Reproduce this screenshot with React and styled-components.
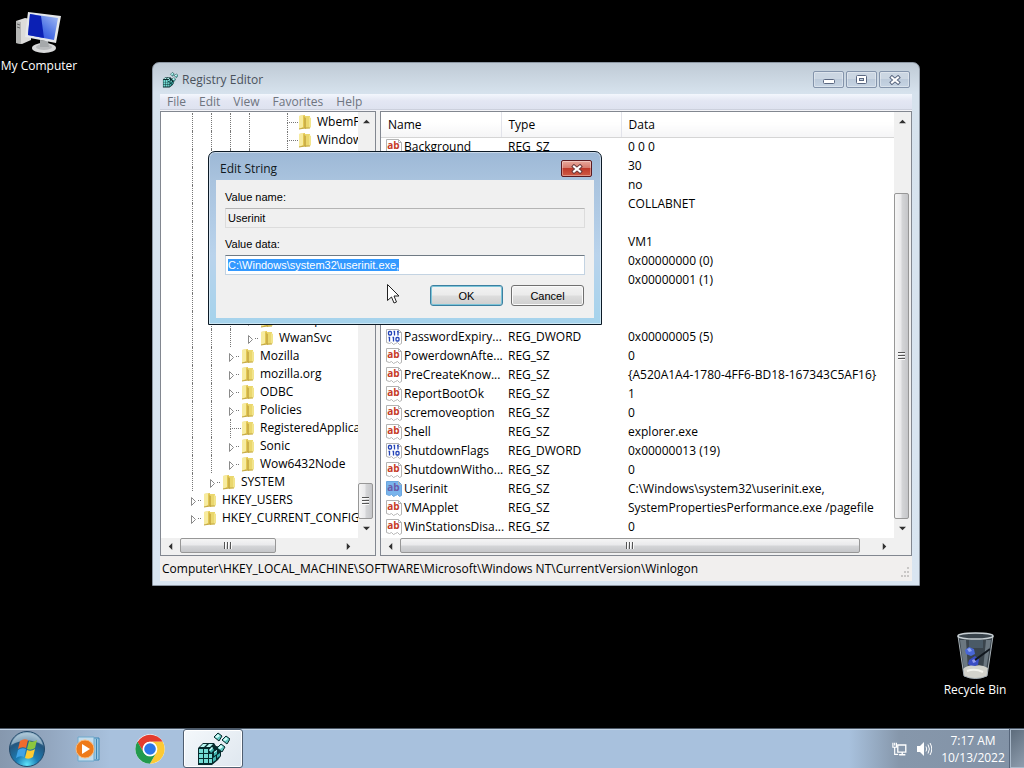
import { useEffect, useRef } from "react";
import styled, { createGlobalStyle, css } from "styled-components";

const fonts = {
  ui: `"Open Sans", "Noto Sans", sans-serif`,
  dialog: `"Liberation Sans", Arial, sans-serif`,
};

const colors = {
  text: "#000",
  muted: "#6f7580",
  border: "#828790",
  dots: "#777",
  select: "#3399ff",
};

const GlobalStyle = createGlobalStyle`
  * {
    box-sizing: border-box;
  }
  body {
    margin: 0;
    background: #000;
    font-family: ${fonts.ui};
    font-size: 12px;
    line-height: 16px;
    color: ${colors.text};
  }
  button, input {
    font: inherit;
    color: inherit;
    padding: 0;
    margin: 0;
  }
  svg {
    flex: none;
  }
`;

const Desktop = styled.div`
  position: relative;
  display: flex;
  flex-direction: column;
  min-height: 100vh;
  overflow: hidden;
  background: #000;
`;

const Workspace = styled.main`
  flex: 1;
`;

/* desktop shortcuts */

const Shortcut = styled.a`
  position: absolute;
  left: ${(p) => p.$x};
  top: ${(p) => p.$y}px;
  display: flex;
  flex-direction: column;
  align-items: center;
  justify-content: space-between;
  width: 80px;
  height: 66px;
  color: #fff;
  text-decoration: none;
  white-space: nowrap;
`;

/* windows */

const Window = styled.section`
  position: absolute;
  left: 152px;
  top: 62px;
  width: 768px;
  display: flex;
  flex-direction: column;
  padding: 0 7px 4px;
  border: 1px solid #8c96a2;
  border-radius: 7px 7px 0 0;
  background: linear-gradient(#bfcad5, #d6e2ed 30px, #d9e5f1);
`;

const TitleBar = styled.header`
  display: flex;
  align-items: flex-start;
  justify-content: space-between;
  height: 31px;
  padding: 8px 2px 0;
`;

const Title = styled.h1`
  display: flex;
  align-items: center;
  gap: 4px;
  margin: 0;
  font-size: 12px;
  line-height: 18px;
  font-weight: 400;
  color: #4a525c;
`;

const Controls = styled.div`
  display: flex;
  gap: 2px;
`;

const ControlButton = styled.button`
  display: flex;
  align-items: center;
  justify-content: center;
  width: 31px;
  height: 17px;
  border: 1px solid #8494ab;
  border-radius: 2px;
  background: linear-gradient(#cbd6e2 50%, #bccada 50%, #c6d4e3);
  box-shadow: inset 0 0 0 1px rgba(255, 255, 255, 0.35);
  ${(p) =>
    p.$danger &&
    css`
      border-color: #5b1a20;
      background: linear-gradient(#e9a89c, #d67b6d 46%, #bf3a2a 50%, #cf5a45);
    `}
`;

const MenuBar = styled.nav`
  display: flex;
  gap: 1px;
  height: 17px;
  padding: 0 1px;
  background: linear-gradient(#f3f7fd, #e3e6f3 7px, #dee2ef 15px, #b9bdc9 16px, #f4f4f8 16px);
`;

const MenuItem = styled.button`
  height: 15px;
  padding: 0 6px;
  border: 0;
  background: none;
  color: ${colors.muted};
  line-height: 14px;
`;

const Panes = styled.div`
  display: grid;
  grid-template-columns: 216px 1fr;
  gap: 4px;
  height: 445px;
  background: #f0f0f0;
`;

const Pane = styled.div`
  display: grid;
  grid-template-columns: 1fr 17px;
  grid-template-rows: 1fr 17px;
  min-width: 0;
  border: 1px solid ${colors.border};
  background: #f0f0f0;
`;

const PaneContent = styled.div`
  min-width: 0;
  overflow: hidden;
  background: #fff;
`;

const StatusBar = styled.footer`
  display: flex;
  align-items: flex-end;
  justify-content: space-between;
  height: 25px;
  padding: 0 2px 4px;
  background: #f1efee;
`;

/* registry tree */

const Tree = styled.ul`
  margin: 0;
  padding: 1px 0 0 22px;
  list-style: none;
`;

const TreeRow = styled.li`
  display: flex;
  align-items: center;
  height: 18px;
  white-space: nowrap;
`;

const Guide = styled.span`
  flex: none;
  width: 19px;
  height: 18px;
  padding-left: 9px;
  &::before {
    content: "";
    display: block;
    width: ${(p) => (p.$tee ? 10 : 1)}px;
    height: ${(p) => (p.$tee ? 9 : 18)}px;
    border-left: ${(p) => (p.$last ? 0 : 1)}px dotted ${colors.dots};
    border-bottom: ${(p) => (p.$tee ? 1 : 0)}px dotted ${colors.dots};
  }
  &::after {
    content: "";
    display: ${(p) => (p.$tee ? "block" : "none")};
    height: 9px;
    border-left: 1px dotted ${colors.dots};
  }
`;

const Expander = styled.button`
  display: flex;
  flex: none;
  align-items: center;
  width: 19px;
  height: 18px;
  padding: 2px 0 0 8px;
  border: 0;
  background: none;
`;

const TreeLabel = styled.span`
  margin-left: 4px;
`;

/* value list */

const ValueTable = styled.table`
  width: 100%;
  table-layout: fixed;
  border-collapse: collapse;
  th, td {
    padding: 0 0 0 7px;
    text-align: left;
    font-weight: 400;
    white-space: nowrap;
  }
  th {
    height: 25px;
    padding-top: 2px;
    border-bottom: 1px solid #d5d5d5;
    border-right: 1px solid #e2e3ea;
    background: linear-gradient(#fff 40%, #f5f5f6);
  }
  th:last-child {
    border-right: 0;
  }
  td {
    height: 19px;
  }
`;

const NameCell = styled.div`
  display: flex;
  align-items: center;
  gap: 2px;
  margin-left: -2px;
`;

/* scrollbars */

const Bar = styled.div`
  display: flex;
  flex-direction: ${(p) => (p.$vertical ? "column" : "row")};
  background: #f0f0f0;
`;

const ArrowButton = styled.button`
  display: flex;
  flex: none;
  align-items: center;
  justify-content: center;
  width: 19px;
  height: 17px;
  border: 0;
  background: none;
  ${(p) =>
    p.$vertical &&
    css`
      width: 17px;
      height: 19px;
    `}
`;

const Track = styled.div`
  display: flex;
  flex: 1;
  flex-direction: inherit;
  min-width: 0;
  min-height: 0;
`;

const Space = styled.div`
  flex: ${(p) => p.$grow} 0 0;
`;

const Thumb = styled.div`
  display: flex;
  flex: ${(p) => p.$grow} 0 0;
  align-items: center;
  justify-content: center;
  border: 1px solid #979797;
  border-radius: 2px;
  margin: ${(p) => (p.$vertical ? "0 2px 0 0" : "0 0 2px")};
  background: linear-gradient(
    ${(p) => (p.$vertical ? "to right" : "to bottom")},
    #f5f5f5,
    #e9e9eb 48%,
    #d5d6d8 52%,
    #c5c6c9
  );
`;

const Grip = styled.span`
  width: 8px;
  height: 7px;
  background: repeating-linear-gradient(
    ${(p) => (p.$vertical ? "to bottom" : "to right")},
    #555 0 1px,
    #fafafa 1px 2px,
    transparent 2px 3px
  );
  ${(p) =>
    p.$vertical &&
    css`
      width: 7px;
      height: 8px;
    `}
`;

/* edit dialog */

const Dialog = styled.section`
  position: absolute;
  left: 208px;
  top: 151px;
  width: 394px;
  padding: 0 7px 6px;
  border: 1px solid #0c1a26;
  border-radius: 7px 7px 0 0;
  background: linear-gradient(#9db8d6, #a9c3de 28px, #b9d3ec 60%, #a5d3ec);
  box-shadow: inset 0 0 0 1px rgba(255, 255, 255, 0.45);
`;

const DialogTitleBar = styled.header`
  display: flex;
  justify-content: space-between;
  height: 28px;
  padding: 8px 2px 0 4px;
`;

const DialogTitle = styled.h2`
  margin: 0;
  font-size: 12px;
  line-height: 18px;
  font-weight: 400;
  color: #101820;
`;

const Form = styled.form`
  display: flex;
  flex-direction: column;
  height: 138px;
  padding: 10px 9px 12px;
  background: #f0f0f0;
  font-family: ${fonts.dialog};
  font-size: 11px;
  line-height: 14px;
`;

const Label = styled.label`
  height: 18px;
`;

const TextBox = styled.input`
  width: 100%;
  height: 20px;
  margin-bottom: 9px;
  padding: 0 2px;
  border: 1px solid #c3d3e2;
  border-top-color: #6f7a84;
  background: #fff;
  outline: none;
  &[readonly] {
    border-color: #dcdcdc;
    border-top-color: #b4b4b4;
    background: #f0f0f0;
  }
  &::selection {
    background: ${colors.select};
    color: #fff;
  }
`;

const DialogButtons = styled.div`
  display: flex;
  justify-content: flex-end;
  gap: 8px;
  padding: 1px 1px 0 0;
`;

const DialogButton = styled.button`
  width: 73px;
  height: 21px;
  border: 1px solid #707070;
  border-radius: 3px;
  background: linear-gradient(#f2f2f2, #ebebeb 48%, #dddddd 52%, #cfcfcf);
  box-shadow: inset 0 0 0 1px #fafafa;
  ${(p) =>
    p.$primary &&
    css`
      border-color: #3c7fa0;
      box-shadow: inset 0 0 0 1px #7cc4d8;
    `}
`;

const Pointer = styled.svg`
  position: absolute;
  left: 386px;
  top: 283px;
`;

/* taskbar */

const Taskbar = styled.footer`
  display: flex;
  height: 40px;
  border-top: 1px solid #4c5866;
  background: linear-gradient(to right, #8698ae, #93a7c0 50px, #a8c1dd 110px, #a8c1dd calc(100% - 175px), #8697ab calc(100% - 125px), #8292a6);
  box-shadow: inset 0 1px 0 #c3d4e6;
`;

const TaskButton = styled.button`
  display: flex;
  align-items: center;
  justify-content: center;
  width: 62px;
  border: 0;
  background: none;
  ${(p) =>
    p.$start &&
    css`
      width: 54px;
      margin-right: 3px;
    `}
  ${(p) =>
    p.$active &&
    css`
      width: 60px;
      margin-left: 2px;
      border: 1px solid #4f5e70;
      border-radius: 3px;
      background: linear-gradient(135deg, #f4f8fb, #dfe7ef);
      box-shadow: inset 0 0 0 1px #fff;
    `}
`;

const Tray = styled.div`
  display: flex;
  align-items: center;
  gap: 4px;
  margin-left: auto;
  color: #fff;
`;

const TrayIcons = styled.div`
  display: flex;
  gap: 8px;
  margin-right: 4px;
`;

const Clock = styled.time`
  width: 66px;
  text-align: center;
  line-height: 17px;
`;

const ShowDesktop = styled.button`
  align-self: stretch;
  width: 14px;
  border: 1px solid #a9b9ca;
  border-right: 0;
  background: linear-gradient(135deg, #5d6c7c, #8e9dae);
  box-shadow: -1px 0 0 #56657a;
`;

/* guides: "|" line, "-" tee, ">" expander, " " gap */
const treeRows = [
  { guides: "|||| -", label: "WbemP" },
  { guides: "|||| -", label: "Window" },
  { guides: "||||" },
  { guides: "||||" },
  { guides: "||||" },
  { guides: "||||" },
  { guides: "||||" },
  { guides: "||||" },
  { guides: "||||" },
  { guides: "||||" },
  { guides: "||||" },
  { guides: "|||>", label: "Workspaces" },
  { guides: "|||>", label: "WwanSvc" },
  { guides: "||>", label: "Mozilla" },
  { guides: "||>", label: "mozilla.org" },
  { guides: "||>", label: "ODBC" },
  { guides: "||>", label: "Policies" },
  { guides: "||-", label: "RegisteredApplica" },
  { guides: "||>", label: "Sonic" },
  { guides: "||>", label: "Wow6432Node" },
  { guides: "|>", label: "SYSTEM" },
  { guides: ">", label: "HKEY_USERS" },
  { guides: ">", label: "HKEY_CURRENT_CONFIG" },
];

const values = [
  { name: "Background", type: "REG_SZ", data: "0 0 0" },
  { data: "30" },
  { data: "no" },
  { data: "COLLABNET" },
  {},
  { data: "VM1" },
  { data: "0x00000000 (0)" },
  { data: "0x00000001 (1)" },
  {},
  {},
  { name: "PasswordExpiry...", type: "REG_DWORD", data: "0x00000005 (5)" },
  { name: "PowerdownAfte...", type: "REG_SZ", data: "0" },
  { name: "PreCreateKnow...", type: "REG_SZ", data: "{A520A1A4-1780-4FF6-BD18-167343C5AF16}" },
  { name: "ReportBootOk", type: "REG_SZ", data: "1" },
  { name: "scremoveoption", type: "REG_SZ", data: "0" },
  { name: "Shell", type: "REG_SZ", data: "explorer.exe" },
  { name: "ShutdownFlags", type: "REG_DWORD", data: "0x00000013 (19)" },
  { name: "ShutdownWitho...", type: "REG_SZ", data: "0" },
  { name: "Userinit", type: "REG_SZ", data: "C:\\Windows\\system32\\userinit.exe,", selected: true },
  { name: "VMApplet", type: "REG_SZ", data: "SystemPropertiesPerformance.exe /pagefile" },
  { name: "WinStationsDisa...", type: "REG_SZ", data: "0" },
];

function RegeditIcon({ size }) {
  const cubes = [[18, 1], [26, 4], [21, 12]];
  return (
    <svg width={size} height={size} viewBox="0 0 34 34" aria-hidden="true">
      <path d="M2 16l5-5h11l2 3 5 1v9l-3 4-6 5H2z" fill="#062a2c" />
      <path d="M3 17h4v4H3zM8 17h4v4H8zM3 22h4v4H3zM8 22h4v4H8zM3 27h4v4H3zM8 27h4v4H8zM13 27h3v4h-3zM13 22h3v4h-3z" fill="#74dcd5" />
      <path d="M4 15l3-3h4l-3 3zM10 15l3-3h4l-3 3z" fill="#b6f6f0" />
      <path d="M13 18l3-3 2 3-3 3zM18 20l3-2v4l-3 2zM17 26l3-2v4l-3 2zM21 23l3-2v3l-3 2z" fill="#3fb5b0" />
      <path d="M13 18l3-3 1 1-3 3zM18 20l3-2v1l-3 2z" fill="#c9fffa" />
      {cubes.map(([x, y]) => (
        <g key={x} transform={`translate(${x} ${y})`}>
          <path d="M4 0l4 3-3 5-5-4z" fill="#5fc4be" stroke="#04282a" />
          <path d="M4 1l2 2-3 2-2-1z" fill="#d4fffb" />
        </g>
      ))}
    </svg>
  );
}

function FolderIcon() {
  return (
    <svg width="16" height="16" viewBox="0 0 16 16" aria-hidden="true">
      <path d="M2 2l6-1v13l-6 1z" fill="#e3c852" />
      <path d="M2 2l4-1v12l-4 2z" fill="#f7eb9f" />
      <path d="M8 2h5v12l-5 1z" fill="#ead76e" />
      <path d="M7 3l2 1v11l-2-1z" fill="#cdb048" />
      <path d="M12 3l2 1v9l-1 1h-1z" fill="#f2e48c" />
      <path d="M2 15l6-1 5 0" stroke="#c3a743" fill="none" />
    </svg>
  );
}

function ValueIcon({ binary, selected }) {
  const ink = selected ? "#6a5aa8" : "#c63a28";
  return (
    <svg width="16" height="16" viewBox="0 0 16 16" aria-hidden="true">
      <path
        d="M.5.5h12l3 3v11l-2 1-2-2-2 1-2 1-2-2-2 1-3-1z"
        fill={selected ? "#79b4ec" : "#fff"}
        stroke={selected ? "#6aa5de" : "#b4b4b4"}
      />
      <path d="M12.500.5v3h3" fill="none" stroke="#b4b4b4" />
      {binary ? (
        <g fill="none" stroke="#2444b8" strokeWidth="1.300">
          <rect x="2.500" y="2.500" width="3" height="3.500" rx="1" />
          <path d="M7.500 2.500h1v4M11 2.500h1v4M2.500 8.500h1v4M6.500 8.500h1v4" />
          <rect x="10" y="8.500" width="3" height="3.500" rx="1" />
        </g>
      ) : (
        <text x="7.500" y="10" textAnchor="middle" fontSize="10" fontWeight="700" fontFamily="Open Sans" fill={ink}>
          ab
        </text>
      )}
    </svg>
  );
}

function ComputerIcon() {
  return (
    <svg width="48" height="46" viewBox="0 0 48 46" aria-hidden="true">
      <defs>
        <linearGradient id="screen" x1="0" y1="1" x2="1" y2="0">
          <stop offset="0" stopColor="#1a35d8" />
          <stop offset=".5" stopColor="#4f74e6" />
          <stop offset="1" stopColor="#a9c0f4" />
        </linearGradient>
      </defs>
      <path d="M1 13l9-3 6 1v21l-9 4-6-1z" fill="#dcdcda" />
      <path d="M1 13l5 1v22l-5-1z" fill="#b5b6b5" />
      <path d="M2 16l3 1M2 19l3 1" stroke="#666" />
      <ellipse cx="29" cy="40" rx="12" ry="5" fill="#d9dadb" />
      <ellipse cx="29" cy="39" rx="8" ry="3" fill="#b9bbbd" />
      <path d="M25 32l8 1 1 6h-9z" fill="#a6a9ab" />
      <path d="M13 4l33 4-5 27-31-6z" fill="#e6e8ea" />
      <path d="M15 6l28 4-4 22-26-5z" fill="url(#screen)" />
      <path d="M15 6l11 2 3 22-16-3z" fill="#0b20b4" />
    </svg>
  );
}

function RecycleBinIcon() {
  return (
    <svg width="40" height="48" viewBox="0 0 40 48" aria-hidden="true">
      <path d="M3 4h35l-6 40q-11 5-23 0z" fill="#3a444c" />
      <path d="M5 8h6l2 30h-4zM31 8h5l-5 30h-3z" fill="#6b7780" />
      <path d="M14 8h14v8H14z" fill="#4a5a66" />
      <path d="M10 18l4-3 5 2 1 5-4 2-5-2z" fill="#4967d6" />
      <path d="M12 17l3-1 2 3-3 1z" fill="#8ea6f2" />
      <path d="M14 28l6-4 4 3-1 6-6 2-4-3z" fill="#3a4dc4" />
      <path d="M17 28l3-1 1 3-3 1z" fill="#8f98ee" />
      <path d="M20 28l15-11" stroke="#10161d" strokeWidth="2" />
      <path d="M8 37q5-5 12-3 6-2 13 2l-1 8q-11 5-23 0z" fill="#d3d3cc" />
      <path d="M12 39q8-3 16 1" fill="none" stroke="#f2f2ec" strokeWidth="2" />
      <path d="M3 4l6 40q11 5 23 0l6-40" fill="none" stroke="#a7b0b6" />
      <ellipse cx="20.500" cy="4" rx="17.500" ry="3" fill="#39434b" stroke="#c8d0d4" strokeWidth="1.500" />
    </svg>
  );
}

function StartIcon() {
  return (
    <svg width="38" height="38" viewBox="0 0 38 38" aria-hidden="true">
      <defs>
        <radialGradient id="orb" cx=".5" cy=".95" r=".9">
          <stop offset="0" stopColor="#5fe4fa" />
          <stop offset=".35" stopColor="#1b7db5" />
          <stop offset=".75" stopColor="#24577f" />
          <stop offset="1" stopColor="#8fb0c6" />
        </radialGradient>
      </defs>
      <circle cx="19" cy="19" r="17.500" fill="url(#orb)" stroke="#234a6b" />
      <path d="M3 15q16-9 32 0Q31 3 19 3T3 15z" fill="#c8dce8" opacity=".55" />
      <path d="M12 11q4-3 8-1l-2 8q-4-2-8 1z" fill="#ef6b2e" />
      <path d="M21 11q4 2 8-1l-2 8q-4 3-8 1z" fill="#8cc63e" />
      <path d="M10 20q4-3 8-1l-2 8q-4-2-8 1z" fill="#3fa3e6" />
      <path d="M19 20q4 2 8-1l-2 8q-4 3-8 1z" fill="#fccb32" />
    </svg>
  );
}

function MediaIcon() {
  return (
    <svg width="26" height="26" viewBox="0 0 26 26" aria-hidden="true">
      <path d="M7 2h17v22H7z" fill="#9cc8e2" stroke="#3f87b4" />
      <path d="M3 1h16v24H3z" fill="#c3dcec" stroke="#6fa9cc" />
      <path d="M21.500 3v20" stroke="#3f87b4" />
      <circle cx="10" cy="13" r="9" fill="#ee7a1a" stroke="#f9b878" />
      <path d="M7 8l8 5-8 5z" fill="#fff" />
    </svg>
  );
}

function ChromeIcon() {
  return (
    <svg width="30" height="30" viewBox="0 0 48 48" aria-hidden="true">
      <circle cx="24" cy="24" r="23.500" fill="#fff" />
      <path d="M24 12.500h20.400A23.500 23.500 0 0 0 4 12.800l10 17.200A11.500 11.500 0 0 1 24 12.500z" fill="#e33b2e" />
      <path d="M34 29.800L23.800 47.500A23.500 23.500 0 0 0 44.400 12.500H24a11.500 11.500 0 0 1 10 17.300z" fill="#fcc934" />
      <path d="M14 29.800L3.800 12.100a23.500 23.500 0 0 0 20 35.400L34 29.800a11.500 11.500 0 0 1-20 0z" fill="#229a4d" />
      <circle cx="24" cy="24" r="11.500" fill="#fff" />
      <circle cx="24" cy="24" r="9.300" fill="#2c76e8" />
    </svg>
  );
}

function CloseGlyph({ stroke = "#5a6780" }) {
  return (
    <svg width="12" height="10" viewBox="0 0 12 10" aria-hidden="true">
      <path d="M3 2.500l6 5M9 2.500l-6 5" stroke={stroke} strokeWidth="4" strokeLinecap="square" />
      <path d="M3 2.500l6 5M9 2.500l-6 5" stroke="#fff" strokeWidth="2" strokeLinecap="square" />
    </svg>
  );
}

const arrows = {
  up: "M0 6l4-4 4 4z",
  down: "M0 2l4 4 4-4z",
  left: "M6 0L2 4l4 4z",
  right: "M2 0l4 4-4 4z",
};

function Arrow({ to, vertical }) {
  return (
    <ArrowButton type="button" $vertical={vertical} aria-label={`Scroll ${to}`}>
      <svg width="7" height="7" viewBox="0 0 8 8">
        <path d={arrows[to]} fill="#303030" />
      </svg>
    </ArrowButton>
  );
}

function ScrollBar({ vertical, before, thumb, after }) {
  return (
    <Bar $vertical={vertical}>
      <Arrow to={vertical ? "up" : "left"} vertical={vertical} />
      <Track>
        <Space $grow={before} />
        <Thumb $grow={thumb} $vertical={vertical}>
          <Grip $vertical={vertical} />
        </Thumb>
        <Space $grow={after} />
      </Track>
      <Arrow to={vertical ? "down" : "right"} vertical={vertical} />
    </Bar>
  );
}

function TreeGuide({ kind, label }) {
  if (kind === ">") {
    return (
      <Expander type="button" aria-label={`Expand ${label}`}>
        <svg width="11" height="9" viewBox="0 0 11 9">
          <path d="M.5.5l4 4-4 4z" fill="#fff" stroke="#8a8a8a" />
          <path d="M7 3.500h1M9 3.500h1" stroke={colors.dots} />
        </svg>
      </Expander>
    );
  }
  return <Guide $tee={kind === "-"} $last={kind === " "} />;
}

function RegistryTree() {
  return (
    <Pane>
      <PaneContent>
        <Tree>
          {treeRows.map(({ guides, label }, i) => (
            <TreeRow key={i}>
              {guides.split("").map((kind, level) => (
                <TreeGuide key={level} kind={kind} label={label} />
              ))}
              {label && <FolderIcon />}
              {label && <TreeLabel>{label}</TreeLabel>}
            </TreeRow>
          ))}
        </Tree>
      </PaneContent>
      <ScrollBar vertical before={354} thumb={34} after={0} />
      <ScrollBar before={0} thumb={95} after={64} />
    </Pane>
  );
}

function ValueList() {
  return (
    <Pane>
      <PaneContent>
        <ValueTable>
          <colgroup>
            <col width="120" />
            <col width="120" />
            <col />
          </colgroup>
          <thead>
            <tr>
              <th>Name</th>
              <th>Type</th>
              <th>Data</th>
            </tr>
          </thead>
          <tbody>
            {values.map(({ name, type, data, selected }, i) => (
              <tr key={i}>
                <td>
                  {name && (
                    <NameCell>
                      <ValueIcon binary={type === "REG_DWORD"} selected={selected} />
                      {name}
                    </NameCell>
                  )}
                </td>
                <td>{type}</td>
                <td>{data}</td>
              </tr>
            ))}
          </tbody>
        </ValueTable>
      </PaneContent>
      <ScrollBar vertical before={62} thumb={326} after={0} />
      <ScrollBar before={0} thumb={460} after={15} />
    </Pane>
  );
}

function RegistryEditor() {
  return (
    <Window>
      <TitleBar>
        <Title>
          <RegeditIcon size={16} />
          Registry Editor
        </Title>
        <Controls>
          <ControlButton type="button" aria-label="Minimize">
            <svg width="12" height="9" viewBox="0 0 12 9">
              <rect x=".5" y="4.500" width="11" height="4" rx="1" fill="#fff" stroke="#5a6780" />
            </svg>
          </ControlButton>
          <ControlButton type="button" aria-label="Maximize">
            <svg width="11" height="9" viewBox="0 0 11 9">
              <rect x=".5" y=".5" width="10" height="8" rx="1" fill="#fff" stroke="#5a6780" />
              <rect x="3.500" y="3.500" width="4" height="2" fill="#c3d0de" stroke="#5a6780" />
            </svg>
          </ControlButton>
          <ControlButton type="button" aria-label="Close">
            <CloseGlyph />
          </ControlButton>
        </Controls>
      </TitleBar>
      <MenuBar>
        {["File", "Edit", "View", "Favorites", "Help"].map((item) => (
          <MenuItem type="button" key={item}>
            {item}
          </MenuItem>
        ))}
      </MenuBar>
      <Panes>
        <RegistryTree />
        <ValueList />
      </Panes>
      <StatusBar>
        <span>Computer\HKEY_LOCAL_MACHINE\SOFTWARE\Microsoft\Windows NT\CurrentVersion\Winlogon</span>
        <svg width="10" height="10" viewBox="0 0 10 10" aria-hidden="true">
          <path d="M7 0h2v2H7zM4 4h2v2H4zM7 4h2v2H7zM1 8h2v2H1zM4 8h2v2H4zM7 8h2v2H7z" fill="#c9c7c6" />
        </svg>
      </StatusBar>
    </Window>
  );
}

function EditStringDialog() {
  const dataRef = useRef(null);

  useEffect(() => {
    dataRef.current.focus();
    dataRef.current.select();
  }, []);

  return (
    <Dialog role="dialog" aria-labelledby="dialog-title">
      <DialogTitleBar>
        <DialogTitle id="dialog-title">Edit String</DialogTitle>
        <ControlButton type="button" $danger aria-label="Close dialog">
          <CloseGlyph stroke="#6b3a3c" />
        </ControlButton>
      </DialogTitleBar>
      <Form onSubmit={(e) => e.preventDefault()}>
        <Label htmlFor="value-name">Value name:</Label>
        <TextBox id="value-name" readOnly defaultValue="Userinit" />
        <Label htmlFor="value-data">Value data:</Label>
        <TextBox id="value-data" ref={dataRef} spellCheck={false} defaultValue={"C:\\Windows\\system32\\userinit.exe,"} />
        <DialogButtons>
          <DialogButton $primary>OK</DialogButton>
          <DialogButton type="button">Cancel</DialogButton>
        </DialogButtons>
      </Form>
    </Dialog>
  );
}

export default function App() {
  return (
    <Desktop>
      <GlobalStyle />
      <Workspace>
        <Shortcut href="#computer" $x="-1px" $y={8}>
          <ComputerIcon />
          My Computer
        </Shortcut>
        <Shortcut href="#recycle-bin" $x="calc(100% - 89px)" $y={632}>
          <RecycleBinIcon />
          Recycle Bin
        </Shortcut>
        <RegistryEditor />
        <EditStringDialog />
        <Pointer width="14" height="22" viewBox="0 0 14 22" aria-hidden="true">
          <path d="M1.500 1.500v16l4-3.500 2.500 6 2.500-1-2.500-6h5z" fill="#fff" stroke="#222" />
        </Pointer>
      </Workspace>
      <Taskbar>
        <TaskButton $start aria-label="Start">
          <StartIcon />
        </TaskButton>
        <TaskButton aria-label="Media Player">
          <MediaIcon />
        </TaskButton>
        <TaskButton aria-label="Chrome">
          <ChromeIcon />
        </TaskButton>
        <TaskButton $active aria-label="Registry Editor">
          <RegeditIcon size={34} />
        </TaskButton>
        <Tray>
          <TrayIcons>
            <svg width="16" height="16" viewBox="0 0 18 16" aria-label="Network">
              <path d="M6.500 3.500h9v8h-9zM8 14.500h7M11.500 12v2" fill="none" stroke="#fff" strokeWidth="1.500" />
              <path d="M1 1v5h4V1M3 1v3M3 6v8h4" fill="none" stroke="#fff" strokeWidth="1.300" />
            </svg>
            <svg width="16" height="16" viewBox="0 0 16 16" aria-label="Volume">
              <path d="M1 5h3l4-4v14l-4-4H1z" fill="#fff" />
              <path d="M10 5.500q1.500 2.500 0 5M12 3.500q2.800 4.500 0 9M14 2q3.500 6 0 12" fill="none" stroke="#fff" />
            </svg>
          </TrayIcons>
          <Clock>
            7:17 AM
            <br />
            10/13/2022
          </Clock>
          <ShowDesktop aria-label="Show desktop" />
        </Tray>
      </Taskbar>
    </Desktop>
  );
}
